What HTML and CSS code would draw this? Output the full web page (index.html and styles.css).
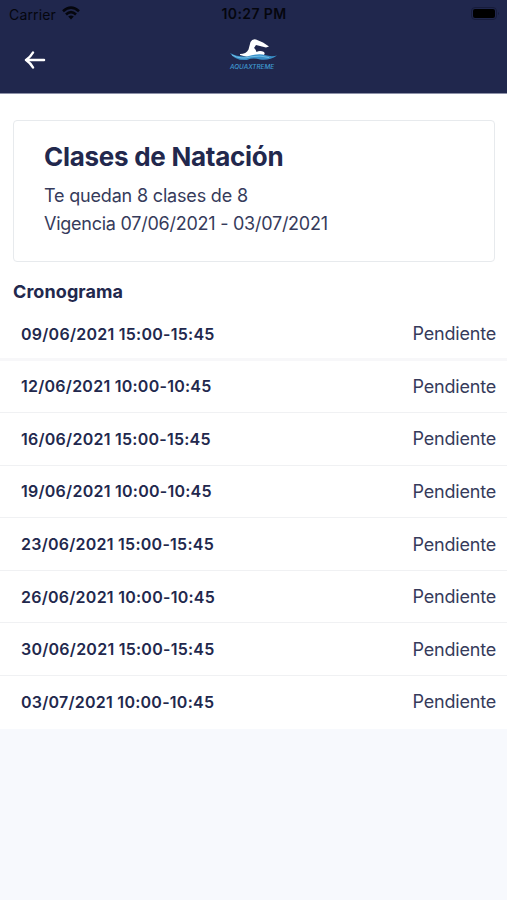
FILE: index.html
```html
<!DOCTYPE html>
<html lang="es">
<head>
<meta charset="utf-8">
<meta name="viewport" content="width=device-width, initial-scale=1">
<title>Clases de Natación</title>
<link rel="stylesheet" href="styles.css">
</head>
<body>
<header class="header">
  <div class="status">
    <div class="carrier"><span class="carrier-name">Carrier</span>
      <svg class="wifi" viewBox="0 0 18 14" fill="none" stroke="#05060d" stroke-width="2.6"><path d="M1 5.2Q9-2 17 5.2M4 8.5Q9 3.8 14 8.5"/><path d="M9 13.5L6.2 10.6Q9 8.4 11.8 10.6Z" fill="#05060d" stroke="none"/></svg>
    </div>
    <span class="clock">10:27 PM</span>
    <svg class="battery" viewBox="0 0 29 14"><rect x=".5" y=".5" width="25" height="12" rx="3.5" fill="none" stroke="#171c3b"/><rect x="2" y="2" width="22" height="9" rx="2" fill="#000"/><path d="M27 5Q29 6.5 27 8Z" fill="#171c3b"/></svg>
  </div>
  <nav class="nav">
    <svg class="back" viewBox="0 0 22 20" fill="none" stroke="#fff" stroke-width="2.5" stroke-linecap="round" stroke-linejoin="round"><path d="M20 10H2M9 2.500Q6.500 7 2 10Q6.500 13 9 17.500"/></svg>
    <svg class="logo" viewBox="0 0 50 34">
      <path d="M11 16C15 16 18 14.500 19.500 11.500L21.500 4Q23 .8 27 1.500L34 4.500L40 8.500L37 9.500L31 8L27 7L25 10Q27 11.500 27.500 14Q31 12 35 14Q37 17 33 18Q22 21 11 17Z" fill="#fff"/>
      <path d="M1 15Q8 19 18 18.500Q29 15 36 17Q42 19 48 17.500Q40 23 31 21.500Q24 19.500 18 22Q6 23 1 15Z" fill="#398fc8"/>
      <path d="M3 17Q12 22 22 18.800Q31 17 40 19.500" fill="none" stroke="#8ed1ee" stroke-width=".7"/>
      <text x="1" y="30.500" class="logo-text" textLength="44" lengthAdjust="spacingAndGlyphs">AQUAXTREME</text>
    </svg>
  </nav>
</header>
<main class="content">
  <section class="card">
    <h1 class="title">Clases de Natación</h1>
    <p class="info remaining">Te quedan 8 clases de 8</p>
    <p class="info validity">Vigencia 07/06/2021 - 03/07/2021</p>
  </section>
  <h2 class="heading">Cronograma</h2>
  <ul class="list">
    <li class="row"><span class="date">09/06/2021 15:00-15:45</span><span class="state">Pendiente</span></li>
    <li class="row"><span class="date">12/06/2021 10:00-10:45</span><span class="state">Pendiente</span></li>
    <li class="row"><span class="date">16/06/2021 15:00-15:45</span><span class="state">Pendiente</span></li>
    <li class="row"><span class="date">19/06/2021 10:00-10:45</span><span class="state">Pendiente</span></li>
    <li class="row"><span class="date">23/06/2021 15:00-15:45</span><span class="state">Pendiente</span></li>
    <li class="row"><span class="date">26/06/2021 10:00-10:45</span><span class="state">Pendiente</span></li>
    <li class="row"><span class="date">30/06/2021 15:00-15:45</span><span class="state">Pendiente</span></li>
    <li class="row"><span class="date">03/07/2021 10:00-10:45</span><span class="state">Pendiente</span></li>
  </ul>
</main>
</body>
</html>
```
FILE: styles.css
```css
* { box-sizing: border-box; }
body { margin: 0; min-height: 900px; background: #f7f9fd; color: #22284d; font-family: Inter, "Liberation Sans", sans-serif; }
h1, h2, p, ul { margin: 0; padding: 0; }
.header { height: 94px; background: #20274d; border-bottom: 1px solid #8d91a8; }
.status { height: 28px; padding: 0 8px 0 9px; display: grid; grid-template-columns: 1fr auto 1fr; align-items: center; color: #05060d; }
.carrier { display: flex; align-items: center; gap: 6px; font-size: 14px; }
.carrier-name { letter-spacing: .15px; }
.wifi { width: 18px; height: 14px; margin-top: -2px; }
.clock { font-size: 14px; font-weight: 600; letter-spacing: .4px; margin-top: -1px; }
.battery { width: 29px; height: 14px; justify-self: end; margin-right: -1px; }
.nav { height: 65px; display: grid; grid-template-columns: 1fr 50px 1fr; align-items: start; padding: 10px 24px 0; }
.back { width: 22px; height: 20px; margin-top: 12px; }
.logo { width: 50px; height: 34px; }
.logo-text { fill: #3f9bd2; font: italic 500 6.2px Inter, sans-serif; }
.content { background: #fff; padding-top: 26px; }
.card { height: 142px; margin: 0 12px 0 13px; padding: 20px 30px; border: 1px solid #e7eaed; border-radius: 4px; }
.title { font-size: 26px; line-height: 32px; font-weight: 700; letter-spacing: -.27px; white-space: nowrap; }
.info { font-size: 18px; line-height: 28px; color: #363b5b; white-space: nowrap; }
.remaining { margin-top: 9px; letter-spacing: -.18px; }
.validity { letter-spacing: -.25px; }
.heading { margin: 18px 0 0 13px; font-size: 18px; line-height: 24px; font-weight: 700; letter-spacing: .08px; }
.list { margin-top: 4px; list-style: none; }
.row { height: 52.57px; display: flex; align-items: center; justify-content: space-between; padding: 0 11px 0 21px; border-bottom: 1px solid #f0f1f3; }
.row:first-child { padding-top: 2px; border-bottom: 3px solid #f7f7f9; }
.row:last-child { border-bottom: 0; padding-bottom: 1px; }
.date { font-size: 16px; font-weight: 600; letter-spacing: .25px; }
.state { font-size: 18px; letter-spacing: -.2px; color: #363b5b; }
```
